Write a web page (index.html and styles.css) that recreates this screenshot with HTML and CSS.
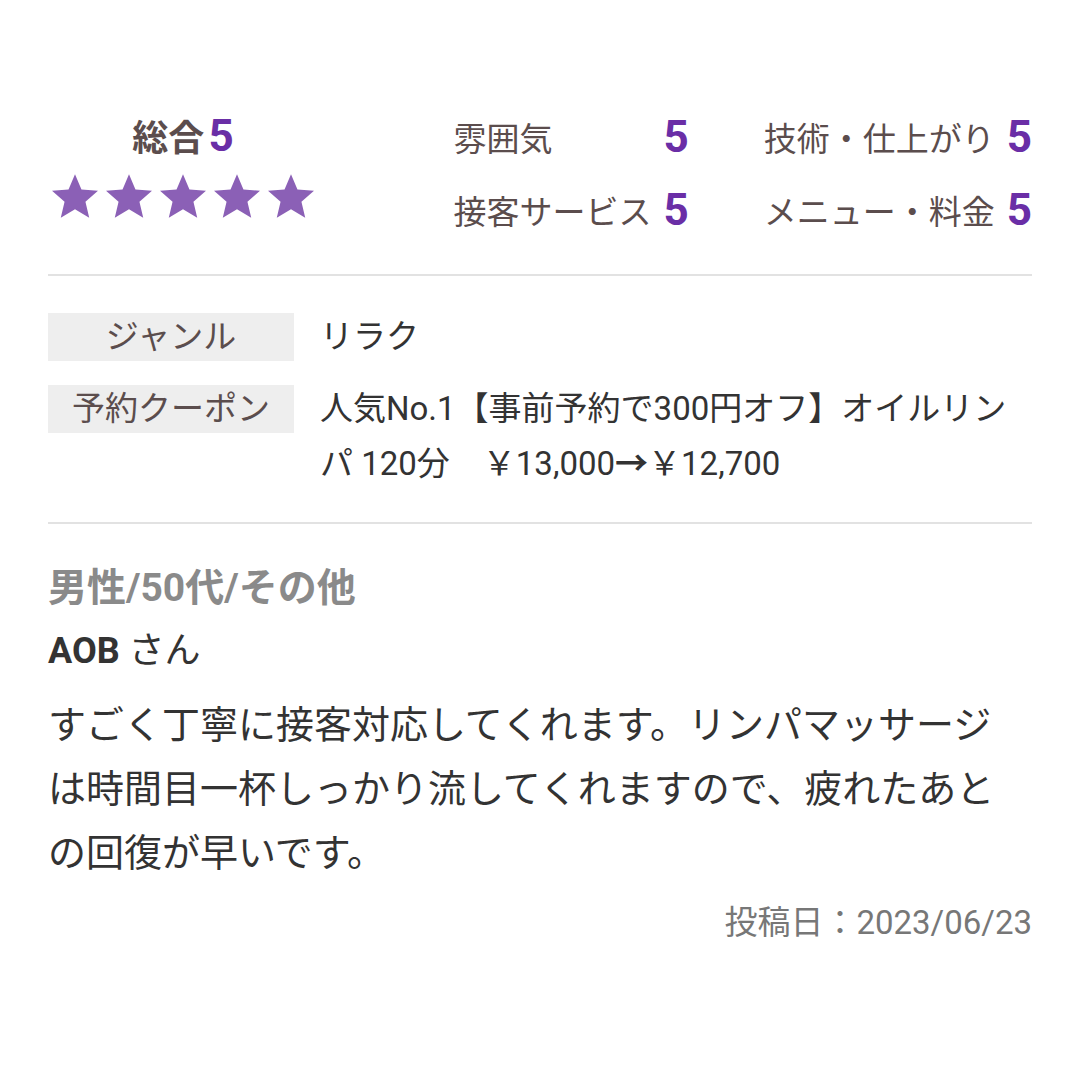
FILE: index.html
```html
<!DOCTYPE html>
<html lang="ja">
<head>
    <meta charset="utf-8">
    <title>口コミ</title>
    <link rel="stylesheet" href="styles.css">
</head>
<body>
    <div class="container">
        <!-- 評価 -->
        <div class="rating">
            <div class="total">
                <div class="total-title">総合<span class="num">5</span></div>
                <div class="stars">
                    <svg viewBox="2 2 20 19"><path d="M12 17.27L18.18 21l-1.64-7.03L22 9.24l-7.19-.61L12 2 9.19 8.63 2 9.24l5.46 4.73L5.82 21z"/></svg>
                    <svg viewBox="2 2 20 19"><path d="M12 17.27L18.18 21l-1.64-7.03L22 9.24l-7.19-.61L12 2 9.19 8.63 2 9.24l5.46 4.73L5.82 21z"/></svg>
                    <svg viewBox="2 2 20 19"><path d="M12 17.27L18.18 21l-1.64-7.03L22 9.24l-7.19-.61L12 2 9.19 8.63 2 9.24l5.46 4.73L5.82 21z"/></svg>
                    <svg viewBox="2 2 20 19"><path d="M12 17.27L18.18 21l-1.64-7.03L22 9.24l-7.19-.61L12 2 9.19 8.63 2 9.24l5.46 4.73L5.82 21z"/></svg>
                    <svg viewBox="2 2 20 19"><path d="M12 17.27L18.18 21l-1.64-7.03L22 9.24l-7.19-.61L12 2 9.19 8.63 2 9.24l5.46 4.73L5.82 21z"/></svg>
                </div>
            </div>
            <div class="detail">
                <span class="label">雰囲気</span><span class="num">5</span>
                <span class="label col2">技術・仕上がり</span><span class="num">5</span>
                <span class="label">接客サービス</span><span class="num">5</span>
                <span class="label col2">メニュー・料金</span><span class="num">5</span>
            </div>
        </div>

        <!-- 情報 -->
        <div class="info">
            <div class="info-row">
                <div class="info-label">ジャンル</div>
                <div class="info-value">リラク</div>
            </div>
            <div class="info-row">
                <div class="info-label">予約クーポン</div>
                <div class="info-value">人気No.1【事前予約で300円オフ】オイルリンパ 120分　￥13,000<span class="arrow">→</span>￥12,700</div>
            </div>
        </div>

        <!-- 本文 -->
        <div class="review">
            <div class="profile">男性/50代/その他</div>
            <div class="name"><b>AOB</b> さん</div>
            <p class="text">すごく丁寧に接客対応してくれます。リンパマッサージは時間目一杯しっかり流してくれますので、疲れたあとの回復が早いです。</p>
            <div class="date">投稿日：2023/06/23</div>
        </div>
    </div>
</body>
</html>
```

FILE: styles.css
```css
body {
    margin: 0;
    font-family: Roboto, "Noto Sans CJK JP", sans-serif;
    background-color: #fff;
    color: #333;
}
.container {
    padding: 0 48px;
}
.rating {
    display: flex;
    justify-content: space-between;
    padding-top: 100px;
    padding-bottom: 28px;
    border-bottom: 2px solid #e2e2e2;
}
.total {
    padding-left: 4px;
}
.total-title {
    text-align: center;
    font-size: 36px;
    font-weight: bold;
    line-height: 73px;
    color: #5b4d4d;
}
.num {
    color: #6a2ea6;
    font-size: 44px;
    font-weight: bold;
}
.total-title .num {
    margin-left: 4px;
}
.stars {
    display: flex;
    gap: 8px;
    margin-top: -2px;
}
.stars svg {
    width: 46px;
    height: 44px;
    fill: #8b60b6;
}
.detail {
    display: grid;
    grid-template-columns: auto auto auto auto;
    grid-auto-rows: 73px;
    align-items: center;
    column-gap: 12px;
}
.label {
    font-size: 33px;
    color: #5b4d4d;
}
.col2 {
    margin-left: 63px;
}
.info {
    padding-top: 35px;
    padding-bottom: 32px;
    border-bottom: 2px solid #e2e2e2;
    display: flex;
    flex-direction: column;
    gap: 20px;
}
.info-row {
    display: flex;
    gap: 26px;
    align-items: flex-start;
}
.info-label {
    flex: 0 0 246px;
    margin-top: 2px;
    height: 48px;
    line-height: 48px;
    background-color: #eeeeee;
    text-align: center;
    font-size: 33px;
    color: #5b4d4d;
}
.info-value {
    flex: 1;
    font-size: 33px;
    line-height: 52px;
    color: #333;
}
.arrow {
    font-family: "Noto Sans CJK JP", sans-serif;
    font-weight: bold;
}
.review {
    padding-top: 39px;
}
.profile {
    font-size: 39px;
    font-weight: bold;
    line-height: 50px;
    color: #8a8a8a;
}
.name {
    margin-top: 13px;
    font-size: 36px;
    line-height: 50px;
    color: #333;
}
.text {
    max-width: 970px;
    margin: 17px 0 0;
    font-size: 38px;
    line-height: 64px;
    color: #333;
}
.date {
    margin-top: 15px;
    text-align: right;
    font-size: 33px;
    line-height: 46px;
    color: #777;
}
```
